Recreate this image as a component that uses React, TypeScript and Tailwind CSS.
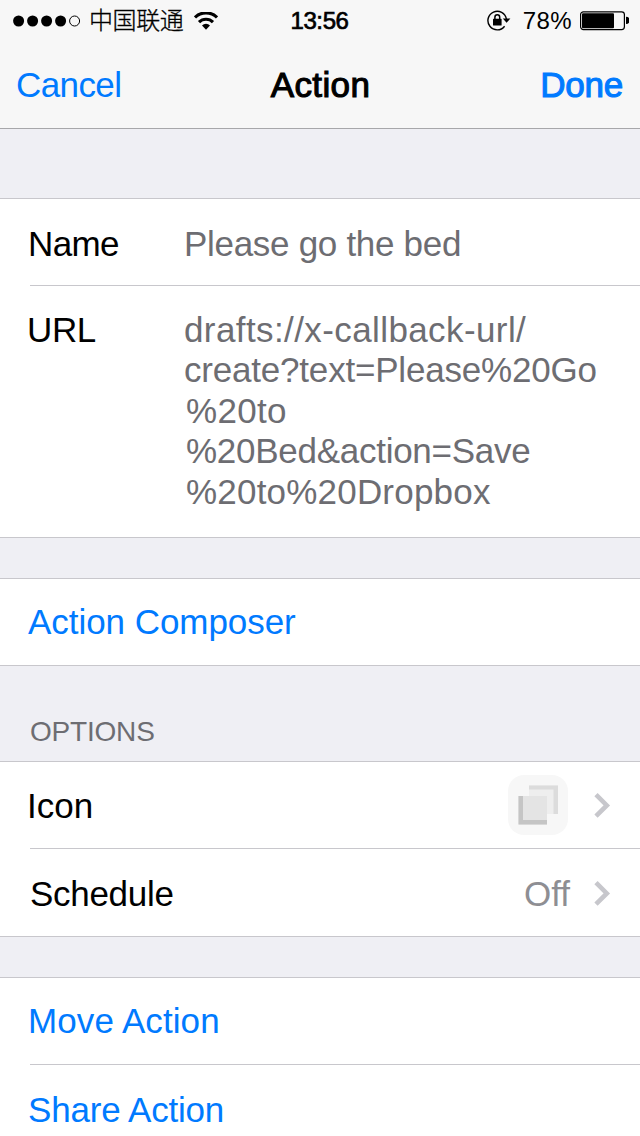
import React from "react";

const Chevron = () => (
  <svg className="ml-6 h-[26px] w-[17px] shrink-0" viewBox="0 0 17 26">
    <path d="M2 2.6 L12.8 13.4 L2 24.2" fill="none" stroke="#c7c7cc" strokeWidth="4.6" />
  </svg>
);

const StatusBar = () => {
  return (
    <div className="grid h-10 grid-cols-[1fr_auto_1fr] items-center pl-[13px] pr-[11px] pt-[1px] text-[24px] leading-none">
      <div className="flex items-center">
        <svg className="h-3 w-[68px]" viewBox="0 0 68 12">
          <circle cx="5.6" cy="6" r="5.5" />
          <circle cx="19.6" cy="6" r="5.5" />
          <circle cx="33.6" cy="6" r="5.5" />
          <circle cx="47.6" cy="6" r="5.5" />
          <circle cx="61.6" cy="6" r="5" fill="none" stroke="#000" />
        </svg>
        <span className="ml-2 pb-[3px] font-['Noto_Sans_CJK_SC',sans-serif] text-[24px] font-light tracking-[-0.4px] [-webkit-text-stroke:0.3px_#000]">
          中国联通
        </span>
        <svg className="ml-[11px] h-[18px] w-6" viewBox="0 0 24 18">
          <path d="M1 5.4 A15.6 15.6 0 0 1 23 5.4" fill="none" stroke="#000" strokeWidth="3.1" />
          <path d="M5 10.1 A9.9 9.9 0 0 1 19 10.1" fill="none" stroke="#000" strokeWidth="3.1" />
          <path d="M12 17.8 L8 13.6 A5.4 5.4 0 0 1 16 13.6 Z" />
        </svg>
      </div>
      <p className="pr-[3px] tracking-[-0.4px] [-webkit-text-stroke:0.7px_#000]">13:56</p>
      <div className="flex items-center justify-end">
        <svg className="h-[22px] w-6" viewBox="0 0 24 22">
          <path d="M19.4 9 A9.3 9.3 0 1 0 17.6 16.2" fill="none" stroke="#000" strokeWidth="1.4" />
          <path d="M15.8 8.6 H23.4 L19.6 12.8 Z" />
          <rect x="6" y="8.8" width="8.6" height="6.8" rx="0.6" />
          <path d="M7.9 9.4 V7.2 A2.4 2.4 0 0 1 12.7 7.2 V9.4" fill="none" stroke="#000" strokeWidth="1.5" />
        </svg>
        <span className="ml-[12px] tracking-[0.4px]">78%</span>
        <svg className="ml-[8px] h-5 w-[49px]" viewBox="0 0 49 20">
          <rect x="0.6" y="0.8" width="43.8" height="17.8" rx="2.8" fill="none" stroke="#000" strokeWidth="1.2" />
          <rect x="2" y="2.2" width="32" height="15" rx="1" />
          <path d="M46 5.8 A3.6 3.6 0 0 1 46 13 Z" />
        </svg>
      </div>
    </div>
  );
};

const NavBar = () => {
  return (
    <div className="grid h-[88px] grid-cols-[1fr_auto_1fr] items-center pl-[16px] pr-[17px]">
      <p className="pt-[1px] text-[#007aff] tracking-[-0.6px]">Cancel</p>
      <p className="pl-[2px] pt-[1px] tracking-[0.4px] [-webkit-text-stroke:1.1px_#000]">Action</p>
      <p className="pt-[1px] text-right text-[#007aff] tracking-[-0.2px] [-webkit-text-stroke:1.1px_#007aff]">Done</p>
    </div>
  );
};

const Divider = () => <div className="ml-[30px] h-[1px] bg-[#c8c7cc]" />;

const App = () => {
  return (
    <div className="h-[1136px] w-[640px] overflow-hidden bg-[#efeff4] font-['Liberation_Sans',Arial,sans-serif] text-[35px] leading-[40px] text-black">
      <header className="border-b border-[#a7a7aa] bg-[#f7f7f7]">
        <StatusBar />
        <NavBar />
      </header>

      <section className="mt-[69px] border-y border-[#c8c7cc] bg-white">
        <div className="flex h-[86px] items-center pt-[3px]">
          <p className="w-[184px] pl-[28px] tracking-[-0.6px]">Name</p>
          <p className="text-[#6d6d72] tracking-[-0.3px]">Please go the bed</p>
        </div>
        <Divider />
        <div className="flex h-[251px] pt-[23.5px] leading-[40.6px]">
          <p className="w-[184px] pl-[27px] pt-[0.5px] tracking-[-0.4px]">URL</p>
          <div className="whitespace-nowrap text-[#6d6d72]">
            <p className="tracking-[0.4px]">drafts://x-callback-url/</p>
            <p className="tracking-[-0.2px]">create?text=Please%20Go</p>
            <p className="pl-[2px] tracking-[0.3px]">%20to</p>
            <p className="pl-[2px] tracking-[-0.27px]">%20Bed&amp;action=Save</p>
            <p className="pl-[2px] tracking-[0.2px]">%20to%20Dropbox</p>
          </div>
        </div>
      </section>

      <section className="mt-10 border-y border-[#c8c7cc] bg-white">
        <div className="flex h-[86px] items-center pl-7 text-[#007aff] tracking-[-0.05px]">Action Composer</div>
      </section>

      <h2 className="flex h-[95px] items-end pb-[9px] pl-[30px] text-[28px] text-[#6d6d72] tracking-[-0.2px]">OPTIONS</h2>

      <section className="border-y border-[#c8c7cc] bg-white">
        <div className="flex h-[86px] items-center pl-[27px] pr-[29px]">
          <p className="flex-1 pt-[1px]">Icon</p>
          <svg className="mr-[2px] h-[60px] w-[60px]" viewBox="0 0 60 60">
            <rect width="60" height="60" rx="16" fill="#f7f7f7" />
            <rect x="21" y="10.5" width="29" height="28.5" fill="#eeeeee" />
            <path d="M21 10.5 H50 V39 H45.5 V14.5 H21 Z" fill="#dcdcdc" />
            <rect x="10.5" y="21" width="28.5" height="28.5" fill="#e4e4e4" />
            <path d="M10.5 21 H15 V45 H39 V49.5 H10.5 Z" fill="#c5c5c5" />
          </svg>
          <Chevron />
        </div>
        <Divider />
        <div className="flex h-[87px] items-center pl-[30px] pr-[29px]">
          <p className="flex-1 pt-[2px] tracking-[-0.3px]">Schedule</p>
          <p className="pt-[2px] text-[#8e8e93]">Off</p>
          <Chevron />
        </div>
      </section>

      <section className="mt-10 border-t border-[#c8c7cc] bg-white text-[#007aff]">
        <div className="flex h-[86px] items-center pl-[28px] tracking-[0.1px]">Move Action</div>
        <Divider />
        <div className="flex h-[86px] items-center pl-[28px] pt-[3px] tracking-[-0.2px]">Share Action</div>
      </section>
    </div>
  );
};

export default App;
